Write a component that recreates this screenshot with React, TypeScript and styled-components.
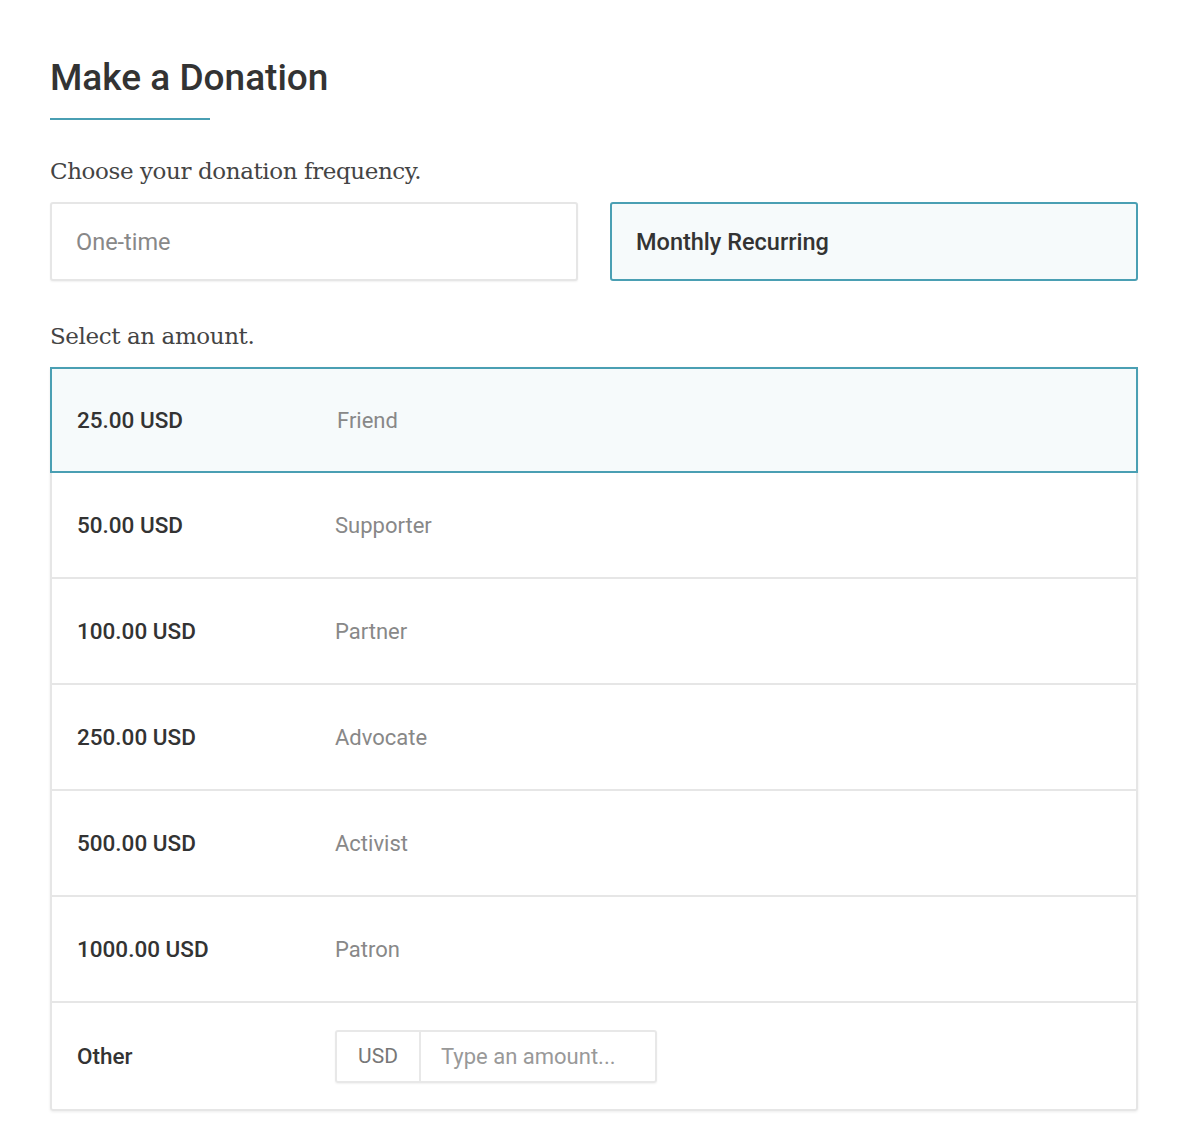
import React from "react";
import styled, { createGlobalStyle } from "styled-components";

const Global = createGlobalStyle`
  body { margin: 0; background: #fff; font-family: Roboto, "Liberation Sans", sans-serif; color: #333; }
`;
const Page = styled.div`padding: 54px 50px 12px 50px; width: 1088px;`;
const Title = styled.h1`margin: 0; font-size: 37px; font-weight: 500; color: #333; line-height: 48px;`;
const Rule = styled.div`width: 160px; height: 2px; background: #4a9fb3; margin-top: 16px; margin-bottom: 36px;`;
const Label = styled.div`font-family: "DejaVu Serif", serif; font-size: 23px; color: #444; line-height: 30px; margin-bottom: 16px; letter-spacing: -0.4px;`;
const FreqRow = styled.div`display: grid; grid-template-columns: 1fr 1fr; gap: 32px; margin-bottom: 40px;`;
const FreqBtn = styled.div<{ $active?: boolean }>`
  height: 79px; box-sizing: border-box; display: flex; align-items: center; padding-left: 24px;
  font-size: 23.5px; border-radius: 3px;
  border: ${p => (p.$active ? "2px solid #4a9fb3" : "2px solid #e6e6e6")};
  background: ${p => (p.$active ? "#f6fafb" : "#fff")};
  color: ${p => (p.$active ? "#333" : "#888")};
  font-weight: ${p => (p.$active ? 500 : 400)};
  box-shadow: ${p => (p.$active ? "none" : "0 1px 2px rgba(0,0,0,0.06)")};
`;
const List = styled.div`border: 2px solid #e6e6e6; border-radius: 3px; box-shadow: 0 1px 3px rgba(0,0,0,0.08);`;
const Row = styled.div<{ $active?: boolean }>`
  height: 106px; box-sizing: border-box; display: flex; align-items: center; padding-left: 25px;
  border-bottom: 2px solid #e6e6e6;
  ${p => p.$active && "border: 2px solid #4a9fb3; background: #f6fafb; margin: -2px -2px 0 -2px; padding-left: 25px;"}
  &:last-child { border-bottom: none; }
`;
const Amount = styled.div<{ $active?: boolean }>`width: ${p => (p.$active ? 260 : 258)}px; font-size: 22.5px; font-weight: 500; color: #333;`;
const Level = styled.div`font-size: 22px; color: #888;`;
const InputGroup = styled.div`display: flex; height: 53px; border: 2px solid #e8e8e8; border-radius: 3px; box-sizing: border-box; box-shadow: 0 1px 2px rgba(0,0,0,0.06);`;
const Addon = styled.div`width: 82px; display: flex; align-items: center; justify-content: center; font-size: 21px; color: #777; border-right: 2px solid #e8e8e8;`;
const Input = styled.div`width: 234px; display: flex; align-items: center; padding-left: 20px; box-sizing: border-box; font-size: 22px; color: #999;`;

const rows = [
  ["25.00 USD", "Friend"],
  ["50.00 USD", "Supporter"],
  ["100.00 USD", "Partner"],
  ["250.00 USD", "Advocate"],
  ["500.00 USD", "Activist"],
  ["1000.00 USD", "Patron"],
];

export default function App() {
  return (
    <Page>
      <Global />
      <Title>Make a Donation</Title>
      <Rule />
      <Label>Choose your donation frequency.</Label>
      <FreqRow>
        <FreqBtn>One-time</FreqBtn>
        <FreqBtn $active>Monthly Recurring</FreqBtn>
      </FreqRow>
      <Label>Select an amount.</Label>
      <List>
        {rows.map(([a, l], i) => (
          <Row key={a} $active={i === 0}>
            <Amount $active={i === 0}>{a}</Amount>
            <Level>{l}</Level>
          </Row>
        ))}
        <Row>
          <Amount>Other</Amount>
          <InputGroup>
            <Addon>USD</Addon>
            <Input>Type an amount...</Input>
          </InputGroup>
        </Row>
      </List>
    </Page>
  );
}
